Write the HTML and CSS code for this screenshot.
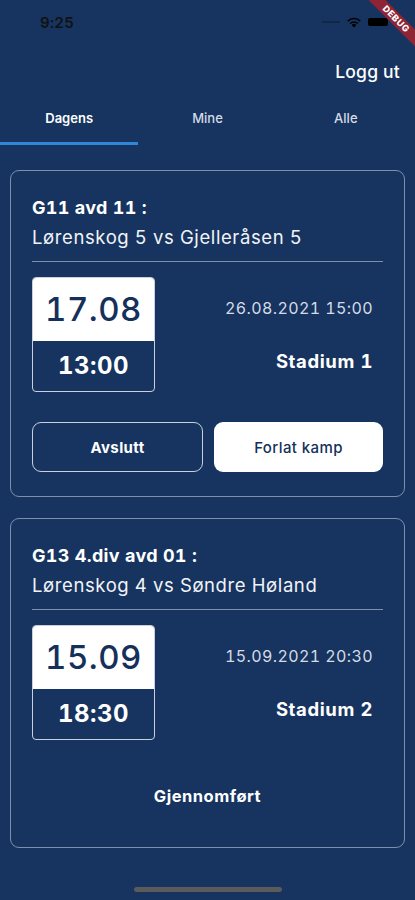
FILE: index.html
```html
<!DOCTYPE html>
<html lang="no">
<head>
  <meta charset="UTF-8">
  <meta name="viewport" content="width=device-width, initial-scale=1.0">
  <title>Kamper</title>
  <link rel="stylesheet" href="styles.css">
</head>
<body>
  <div class="status-bar">
    <span class="status-time">9:25</span>
    <div class="status-icons">
      <span class="signal"></span>
      <svg class="wifi" width="16" height="12" viewBox="0 0 16 12">
        <path d="M8 11.5 L5.6 9 A3.4 3.4 0 0 1 10.4 9 Z" fill="#000"/>
        <path d="M3.6 7 A6.2 6.2 0 0 1 12.4 7 L11.3 8.1 A4.7 4.7 0 0 0 4.7 8.1 Z" fill="#000"/>
        <path d="M1.2 4.6 A9.6 9.6 0 0 1 14.8 4.6 L13.7 5.7 A8.1 8.1 0 0 0 2.3 5.7 Z" fill="#000"/>
      </svg>
      <span class="battery"></span>
    </div>
  </div>
  <div class="debug-banner">DEBUG</div>

  <header class="app-bar">
    <a class="logout">Logg ut</a>
  </header>

  <nav class="tabs">
    <div class="tab is-active">Dagens</div>
    <div class="tab">Mine</div>
    <div class="tab">Alle</div>
  </nav>

  <main class="match-list">
    <section class="match-card">
      <h3 class="match-title">G11 avd 11 :</h3>
      <p class="match-teams">Lørenskog 5 vs Gjelleråsen 5</p>
      <hr class="match-divider">
      <div class="match-info">
        <div class="date-box">
          <div class="date-box-day">17.08</div>
          <div class="date-box-time">13:00</div>
        </div>
        <div class="match-meta">
          <span class="match-datetime">26.08.2021 15:00</span>
          <span class="match-stadium">Stadium 1</span>
        </div>
      </div>
      <div class="match-actions">
        <button class="btn btn-outline">Avslutt</button>
        <button class="btn btn-light">Forlat kamp</button>
      </div>
    </section>

    <section class="match-card">
      <h3 class="match-title">G13 4.div avd 01 :</h3>
      <p class="match-teams">Lørenskog 4 vs Søndre Høland</p>
      <hr class="match-divider">
      <div class="match-info">
        <div class="date-box">
          <div class="date-box-day">15.09</div>
          <div class="date-box-time">18:30</div>
        </div>
        <div class="match-meta">
          <span class="match-datetime">15.09.2021 20:30</span>
          <span class="match-stadium">Stadium 2</span>
        </div>
      </div>
      <p class="match-done">Gjennomført</p>
    </section>
  </main>

  <div class="home-indicator"></div>
</body>
</html>
```

FILE: styles.css
```css
:root {
  --main-font: Inter, "Noto Sans", sans-serif;
  --bg-color: #16345f;
  --text-color: #ffffff;
  --muted-color: #d5dbe6;
  --line-color: #7d8fae;
  --accent-color: #2f86db;
  --dark-text: #15305b;
}

html {
  box-sizing: border-box;
  font-family: var(--main-font);
  font-variant-numeric: tabular-nums;
}

*,
*::before,
*::after {
  box-sizing: inherit;
}

body {
  margin: 0;
  min-height: 900px;
  background-color: var(--bg-color);
  color: var(--text-color);
  position: relative;
  overflow: hidden;
}

/* status bar */
.status-bar {
  height: 44px;
  display: flex;
  align-items: center;
  justify-content: space-between;
  padding: 0 27px 0 40px;
}

.status-time {
  font-size: 15px;
  font-weight: 600;
  color: #111;
  letter-spacing: 0.3px;
}

.status-icons {
  display: flex;
  align-items: center;
  gap: 6px;
}

.signal {
  width: 18px;
  height: 2px;
  background-color: rgba(0, 0, 0, 0.25);
}

.battery {
  width: 20px;
  height: 8px;
  background-color: #000;
  border-radius: 2px;
}

.debug-banner {
  position: absolute;
  top: 13px;
  right: -21px;
  width: 80px;
  height: 12px;
  line-height: 12px;
  background-color: #8e2436;
  color: #fff;
  font-size: 9px;
  font-weight: 800;
  letter-spacing: 0.5px;
  text-align: center;
  transform: rotate(45deg);
}

/* app bar + tabs */
.app-bar {
  height: 54px;
  display: flex;
  align-items: center;
  justify-content: flex-end;
  padding-right: 15px;
}

.logout {
  font-size: 17.5px;
  font-weight: 500;
  letter-spacing: 0.2px;
}

.tabs {
  display: flex;
  height: 47px;
}

.tab {
  flex: 1;
  text-align: center;
  padding-top: 12px;
  font-size: 13px;
  font-weight: 500;
  color: var(--muted-color);
}

.tab.is-active {
  color: var(--text-color);
  font-weight: 600;
  border-bottom: 3px solid var(--accent-color);
}

/* cards */
.match-list {
  padding: 25px 10px 0;
  display: flex;
  flex-direction: column;
  gap: 21px;
}

.match-card {
  border: 1.5px solid var(--line-color);
  border-radius: 9px;
  padding: 25px 21px 24px;
}

.match-title {
  margin: 0;
  font-size: 18px;
  font-weight: 700;
  line-height: 24px;
  letter-spacing: 0.3px;
}

.match-teams {
  margin: 5px 0 0;
  font-size: 18.5px;
  line-height: 24px;
  letter-spacing: 0.6px;
  color: #f1f3f7;
}

.match-divider {
  margin: 12px 0 15px;
  border: 0;
  border-top: 1px solid var(--line-color);
}

.match-info {
  display: flex;
  justify-content: space-between;
}

.date-box {
  border: 1.5px solid #c9d0dc;
  border-radius: 4px;
  overflow: hidden;
  text-align: center;
}

.date-box-day {
  background-color: #fff;
  color: var(--dark-text);
  font-size: 33px;
  font-weight: 500;
  height: 63px;
  line-height: 63px;
  padding: 0 12px;
  letter-spacing: 0.5px;
}

.date-box-time {
  font-size: 24px;
  font-weight: 700;
  height: 50px;
  line-height: 50px;
  letter-spacing: 0.5px;
}

.match-meta {
  display: flex;
  flex-direction: column;
  align-items: flex-end;
  padding: 21px 10px 0 0;
}

.match-datetime {
  font-size: 16px;
  line-height: 20px;
  letter-spacing: 0.4px;
  color: var(--muted-color);
}

.match-stadium {
  margin-top: 31px;
  font-size: 18.5px;
  font-weight: 700;
  line-height: 24px;
  letter-spacing: 0.6px;
}

.match-actions {
  display: flex;
  gap: 11px;
  margin-top: 30px;
}

.btn {
  flex: 1;
  height: 50px;
  border-radius: 9px;
  font-family: var(--main-font);
  font-size: 15px;
  letter-spacing: 0.4px;
  cursor: pointer;
}

.btn-outline {
  background: transparent;
  border: 1.5px solid #c9d0dc;
  color: #fff;
  font-weight: 700;
}

.btn-light {
  background: #fff;
  border: 0;
  color: var(--dark-text);
  font-weight: 500;
}

.match-done {
  margin: 45px 0 16px;
  text-align: center;
  font-size: 16.5px;
  font-weight: 700;
  line-height: 22px;
  letter-spacing: 0.5px;
}

.home-indicator {
  position: absolute;
  left: 134px;
  bottom: 8px;
  width: 148px;
  height: 5px;
  border-radius: 3px;
  background-color: #5b5b5b;
}
```
